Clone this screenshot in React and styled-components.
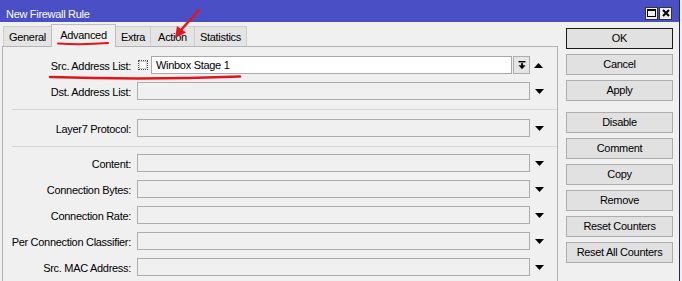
import React from 'react';
import styled, { createGlobalStyle } from 'styled-components';

const GlobalStyle = createGlobalStyle`
  html, body { margin: 0; padding: 0; background: #f0f0f0; }
  body {
    font-family: "Liberation Sans", Arial, sans-serif;
    font-size: 11px;
    letter-spacing: -0.3px;
    color: #000;
  }
  #root { width: 682px; height: 281px; overflow: hidden; }
`;

const Window = styled.div`
  position: relative;
  box-sizing: border-box;
  width: 680px;
  height: 281px;
  border-right: 1px solid #262650;
  background: #f0f0f0;
  display: flex;
  flex-direction: column;
  overflow: hidden;
`;

const TitleBar = styled.div`
  box-sizing: border-box;
  height: 22px;
  flex: none;
  background: #4a4fc5;
  display: flex;
  align-items: center;
  justify-content: space-between;
  padding: 4px 7px 0 6px;
`;

const Title = styled.div`
  color: #ffffff;
  font-size: 11px;
  line-height: 13px;
  margin-top: 3px;
`;

const Controls = styled.div`
  display: flex;
  gap: 1px;
`;

const CtrlBox = styled.div`
  box-sizing: border-box;
  width: 13px;
  height: 13px;
  border: 1px solid #333;
  background: #eeeeee;
  display: flex;
  align-items: center;
  justify-content: center;
`;

const Body = styled.div`
  flex: 1;
  display: flex;
  min-height: 0;
`;

const LeftPane = styled.div`
  box-sizing: border-box;
  width: 558px;
  padding-left: 2px;
  display: flex;
  flex-direction: column;
`;

const TabStrip = styled.div`
  height: 24px;
  flex: none;
  display: flex;
  align-items: flex-end;
  padding-left: 1px;
`;

const Tab = styled.div`
  position: relative;
  z-index: ${p => (p.$active ? 2 : 0)};
  box-sizing: border-box;
  width: ${p => p.$w}px;
  height: ${p => (p.$active ? 23 : 20)}px;
  margin-right: -1px;
  margin-bottom: ${p => (p.$active ? -1 : 0)}px;
  border: 1px solid ${p => (p.$active ? '#bdbdbd' : '#cdcdcd')};
  border-bottom: none;
  background: ${p => (p.$active ? '#f0f0f0' : '#e4e4e4')};
  display: flex;
  justify-content: center;
  padding-top: ${p => (p.$active ? 4 : 4)}px;
  line-height: 13px;
`;

const Panel = styled.div`
  position: relative;
  z-index: 1;
  flex: 1;
  border: 1px solid #b4b4b4;
  border-bottom: none;
  background: #f0f0f0;
`;

const Section = styled.div`
  padding: ${p => p.$pad};
`;

const Divider = styled.div`
  height: 1px;
  margin-left: 9px;
  background: #d7d7d7;
`;

const Row = styled.div`
  height: 26px;
  display: flex;
  align-items: center;
`;

const Label = styled.div`
  width: 128px;
  text-align: right;
  white-space: nowrap;
  padding-top: 1px;
`;

const Field = styled.div`
  width: 393px;
  margin-left: 6px;
  display: flex;
  align-items: center;
`;

const EmptyInput = styled.div`
  box-sizing: border-box;
  width: 100%;
  height: 18px;
  border: 1px solid #adadad;
  background: #f0f0f0;
`;

const CheckMark = styled.div`
  box-sizing: border-box;
  width: 10px;
  height: 10px;
  margin-left: 1px;
  margin-right: 3px;
  border: 1px dotted #444;
  background: #fff;
  box-shadow: inset 0 0 0 1px #d0d0d0;
`;

const TextInput = styled.div`
  box-sizing: border-box;
  width: 361px;
  height: 18px;
  border: 1px solid #a9a9a9;
  background: #ffffff;
  padding-left: 4px;
  line-height: 16px;
  white-space: nowrap;
`;

const DropButton = styled.div`
  box-sizing: border-box;
  width: 17px;
  height: 18px;
  margin-left: 1px;
  border: 1px solid #adadad;
  background: #e6e6e6;
  display: flex;
  align-items: center;
  justify-content: center;
`;

const ArrowCell = styled.div`
  padding-left: ${p => p.$pl}px;
  display: flex;
  align-items: center;
  height: 26px;
`;

const ButtonColumn = styled.div`
  width: 107px;
  margin-left: 8px;
  padding-top: 6px;
  display: flex;
  flex-direction: column;
  gap: 11px;
`;

const ButtonGroup = styled.div`
  display: flex;
  flex-direction: column;
  gap: 5px;
`;

const Button = styled.button`
  box-sizing: border-box;
  height: 21px;
  width: 100%;
  margin: 0;
  padding: 0 0 1px;
  border: 1px solid ${p => (p.$primary ? '#1a1a1a' : '#adadad')};
  background: #e1e1e1;
  font-family: inherit;
  font-size: 11px;
  letter-spacing: -0.3px;
  color: #000;
  display: flex;
  align-items: center;
  justify-content: center;
`;

const Annotations = styled.svg`
  position: absolute;
  left: 0;
  top: 0;
  pointer-events: none;
  z-index: 5;
`;

const DownArrow = () => (
  <svg width="9" height="5" viewBox="0 0 9 5"><polygon points="0,0 9,0 4.5,5" fill="#000" /></svg>
);
const UpArrow = () => (
  <svg width="9" height="5" viewBox="0 0 9 5"><polygon points="0,5 9,5 4.5,0" fill="#000" /></svg>
);
const BarDown = () => (
  <svg width="8" height="9" viewBox="0 0 8 9">
    <rect x="0.5" y="0" width="7" height="1.4" fill="#000" />
    <rect x="3" y="2.2" width="2" height="2.3" fill="#000" />
    <polygon points="0.5,4.3 7.5,4.3 4,8.3" fill="#000" />
  </svg>
);

const tabs = [
  { name: 'General', w: 49 },
  { name: 'Advanced', w: 65, active: true },
  { name: 'Extra', w: 36 },
  { name: 'Action', w: 45 },
  { name: 'Statistics', w: 53 },
];

const sections = [
  { pad: '5px 0 5px', rows: ['Src. Address List:', 'Dst. Address List:'] },
  { pad: '5px 0 5px', rows: ['Layer7 Protocol:'] },
  {
    pad: '3px 0 0',
    rows: ['Content:', 'Connection Bytes:', 'Connection Rate:', 'Per Connection Classifier:', 'Src. MAC Address:'],
  },
];

const FieldRow = ({ label }) => {
  if (label === 'Src. Address List:') {
    return (
      <Row>
        <Label>{label}</Label>
        <Field>
          <CheckMark />
          <TextInput>Winbox Stage 1</TextInput>
          <DropButton><BarDown /></DropButton>
        </Field>
        <ArrowCell $pl={4}><UpArrow /></ArrowCell>
      </Row>
    );
  }
  return (
    <Row>
      <Label>{label}</Label>
      <Field><EmptyInput /></Field>
      <ArrowCell $pl={5}><DownArrow /></ArrowCell>
    </Row>
  );
};

const groups = [
  [{ t: 'OK', primary: true }, { t: 'Cancel' }, { t: 'Apply' }],
  [{ t: 'Disable' }, { t: 'Comment' }, { t: 'Copy' }, { t: 'Remove' }, { t: 'Reset Counters' }, { t: 'Reset All Counters' }],
];

export default function App() {
  return (
    <>
      <GlobalStyle />
      <Window>
        <TitleBar>
          <Title>New Firewall Rule</Title>
          <Controls>
            <CtrlBox>
              <svg width="9" height="8" viewBox="0 0 9 8">
                <rect x="0.5" y="0.5" width="8" height="7" fill="none" stroke="#000" strokeWidth="1" />
                <rect x="0" y="0" width="9" height="2" fill="#000" />
              </svg>
            </CtrlBox>
            <CtrlBox>
              <svg width="8" height="8" viewBox="0 0 8 8">
                <path d="M1 1 L7 7 M7 1 L1 7" stroke="#000" strokeWidth="2" />
              </svg>
            </CtrlBox>
          </Controls>
        </TitleBar>
        <Body>
          <LeftPane>
            <TabStrip>
              {tabs.map(t => (
                <Tab key={t.name} $w={t.w} $active={t.active}>{t.name}</Tab>
              ))}
            </TabStrip>
            <Panel>
              {sections.map((s, i) => (
                <React.Fragment key={i}>
                  {i > 0 && <Divider />}
                  <Section $pad={s.pad}>
                    {s.rows.map(r => <FieldRow key={r} label={r} />)}
                  </Section>
                </React.Fragment>
              ))}
            </Panel>
          </LeftPane>
          <ButtonColumn>
            {groups.map((g, i) => (
              <ButtonGroup key={i}>
                {g.map(b => <Button key={b.t} $primary={b.primary}>{b.t}</Button>)}
              </ButtonGroup>
            ))}
          </ButtonColumn>
        </Body>
        <Annotations width="682" height="281" viewBox="0 0 682 281">
          <path d="M58 43.5 Q83 45 108 43" stroke="#e3151c" strokeWidth="2" fill="none" strokeLinecap="round" />
          <path d="M50 77 Q145 80 240 76.5" stroke="#e3151c" strokeWidth="2.5" fill="none" strokeLinecap="round" />
          <line x1="199" y1="10" x2="181" y2="30" stroke="#e3151c" strokeWidth="2.5" strokeLinecap="round" />
          <polygon points="175,38 177,26 186,32.5" fill="#e3151c" />
        </Annotations>
      </Window>
    </>
  );
}
